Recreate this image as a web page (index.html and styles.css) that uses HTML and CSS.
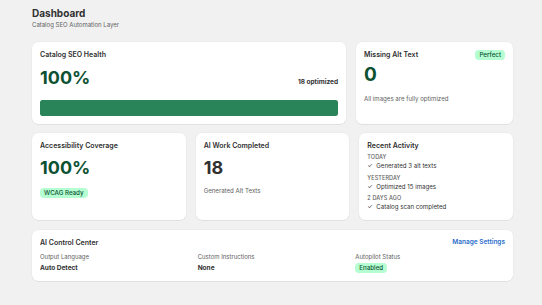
FILE: index.html
```html
<!DOCTYPE html>
<html>
<head>
<meta charset="utf-8">
<link rel="stylesheet" href="styles.css">
</head>
<body>
<main class="page">
  <header class="page-header">
    <h1 class="page-title">Dashboard</h1>
    <p class="page-subtitle">Catalog SEO Automation Layer</p>
  </header>

  <section class="row row-top">
    <div class="card">
      <h2 class="card-title">Catalog SEO Health</h2>
      <div class="metric-line">
        <span class="metric metric-green">100%</span>
        <span class="metric-side">18 optimized</span>
      </div>
      <div class="progress"><div class="progress-fill" style="width:100%"></div></div>
    </div>
    <div class="card">
      <div class="card-head">
        <h2 class="card-title">Missing Alt Text</h2>
        <span class="badge">Perfect</span>
      </div>
      <div class="metric metric-green metric-tight">0</div>
      <p class="note note-top">All images are fully optimized</p>
    </div>
  </section>

  <section class="row row-mid">
    <div class="card">
      <h2 class="card-title">Accessibility Coverage</h2>
      <div class="metric metric-green">100%</div>
      <span class="badge badge-block">WCAG Ready</span>
    </div>
    <div class="card">
      <h2 class="card-title">AI Work Completed</h2>
      <div class="metric">18</div>
      <p class="note">Generated Alt Texts</p>
    </div>
    <div class="card">
      <h2 class="card-title">Recent Activity</h2>
      <ul class="activity">
        <li class="activity-group">
          <span class="activity-label">TODAY</span>
          <span class="activity-item"><span class="check">✓</span>Generated 3 alt texts</span>
        </li>
        <li class="activity-group">
          <span class="activity-label">YESTERDAY</span>
          <span class="activity-item"><span class="check">✓</span>Optimized 15 images</span>
        </li>
        <li class="activity-group">
          <span class="activity-label">2 DAYS AGO</span>
          <span class="activity-item"><span class="check">✓</span>Catalog scan completed</span>
        </li>
      </ul>
    </div>
  </section>

  <section class="card control">
    <div class="card-head">
      <h2 class="card-title">AI Control Center</h2>
      <a class="link" href="#">Manage Settings</a>
    </div>
    <div class="settings">
      <div class="setting">
        <span class="setting-label">Output Language</span>
        <span class="setting-value">Auto Detect</span>
      </div>
      <div class="setting">
        <span class="setting-label">Custom Instructions</span>
        <span class="setting-value">None</span>
      </div>
      <div class="setting">
        <span class="setting-label">Autopilot Status</span>
        <span class="badge badge-block">Enabled</span>
      </div>
    </div>
  </section>
</main>
</body>
</html>
```

FILE: styles.css
```css
* { box-sizing: border-box; }
html, body { margin: 0; padding: 0; }
body {
  background: #f1f1f1;
  font-family: Inter, "Noto Sans", sans-serif;
  color: #303030;
  width: 542px;
  height: 305px;
  overflow: hidden;
}
.page {
  padding: 6px 29px 0 32px;
}
.page-title {
  margin: 0;
  font-size: 10px;
  line-height: 14px;
  font-weight: 700;
  color: #303030;
}
.page-subtitle {
  margin: 0;
  font-size: 6px;
  line-height: 10px;
  color: #616161;
}
.page-header { margin-bottom: 12px; }

.row {
  display: grid;
  gap: 10px;
  margin-bottom: 10px;
}
.row-top { grid-template-columns: 2fr 1fr; margin-bottom: 9px; }
.row-mid { grid-template-columns: 1fr 1fr 1fr; }

.card {
  background: #ffffff;
  border-radius: 6px;
  padding: 8px;
  box-shadow: 0 0.5px 0 0 #d4d4d4, 0 0 0 0.5px rgba(0,0,0,0.04);
}
.card-title {
  margin: 0;
  font-size: 7px;
  line-height: 9px;
  font-weight: 600;
  color: #303030;
}
.card-head {
  display: flex;
  justify-content: space-between;
  align-items: center;
}
.metric {
  display: block;
  margin-top: 7px;
  font-size: 18px;
  line-height: 22px;
  font-weight: 700;
  color: #303030;
}
.metric-green { color: #0c5132; }
.metric-tight { margin-top: 4px; font-size: 19px; }
.metric-line {
  display: flex;
  justify-content: space-between;
  align-items: baseline;
}
.metric-line .metric { margin-top: 8px; }
.metric-side {
  font-size: 6.5px;
  font-weight: 650;
  color: #303030;
}
.progress {
  margin-top: 11px;
  height: 16px;
  border-radius: 2px;
  background: #e3e3e3;
  overflow: hidden;
}
.progress-fill {
  height: 100%;
  background: #29845a;
  border-radius: 2px;
}
.badge {
  display: inline-block;
  font-size: 6.2px;
  line-height: 9.5px;
  padding: 0 4px;
  border-radius: 4px;
  background: #b4fed2;
  color: #0c5132;
  font-weight: 550;
}
.badge-block { align-self: flex-start; }
.row-mid .badge { margin-top: 9px; }
.note {
  margin: 7px 0 0;
  font-size: 6.1px;
  line-height: 10px;
  color: #616161;
}
.note-top { margin-top: 8px; }

.activity {
  list-style: none;
  margin: 3px 0 0;
  padding: 0;
  display: flex;
  flex-direction: column;
  gap: 3px;
}
.activity-group { display: flex; flex-direction: column; }
.activity-label {
  font-size: 5.5px;
  line-height: 8px;
  color: #616161;
  font-weight: 500;
  letter-spacing: 0.1px;
}
.activity-item {
  font-size: 6.1px;
  line-height: 9.5px;
  color: #303030;
}
.check {
  display: inline-block;
  width: 9px;
}

.control { margin-bottom: 0; }
.link {
  font-size: 6.5px;
  line-height: 9px;
  font-weight: 600;
  color: #2c6ecb;
  text-decoration: none;
}
.settings {
  margin-top: 5px;
  display: grid;
  grid-template-columns: 1fr 1fr 1fr;
  gap: 8px;
}
.setting { display: flex; flex-direction: column; gap: 1px; }
.setting-label {
  font-size: 6px;
  line-height: 10px;
  color: #616161;
  font-weight: 400;
}
.setting-value {
  font-size: 6.5px;
  line-height: 10px;
  font-weight: 650;
  color: #303030;
}
.setting .badge { line-height: 10px; }
```
